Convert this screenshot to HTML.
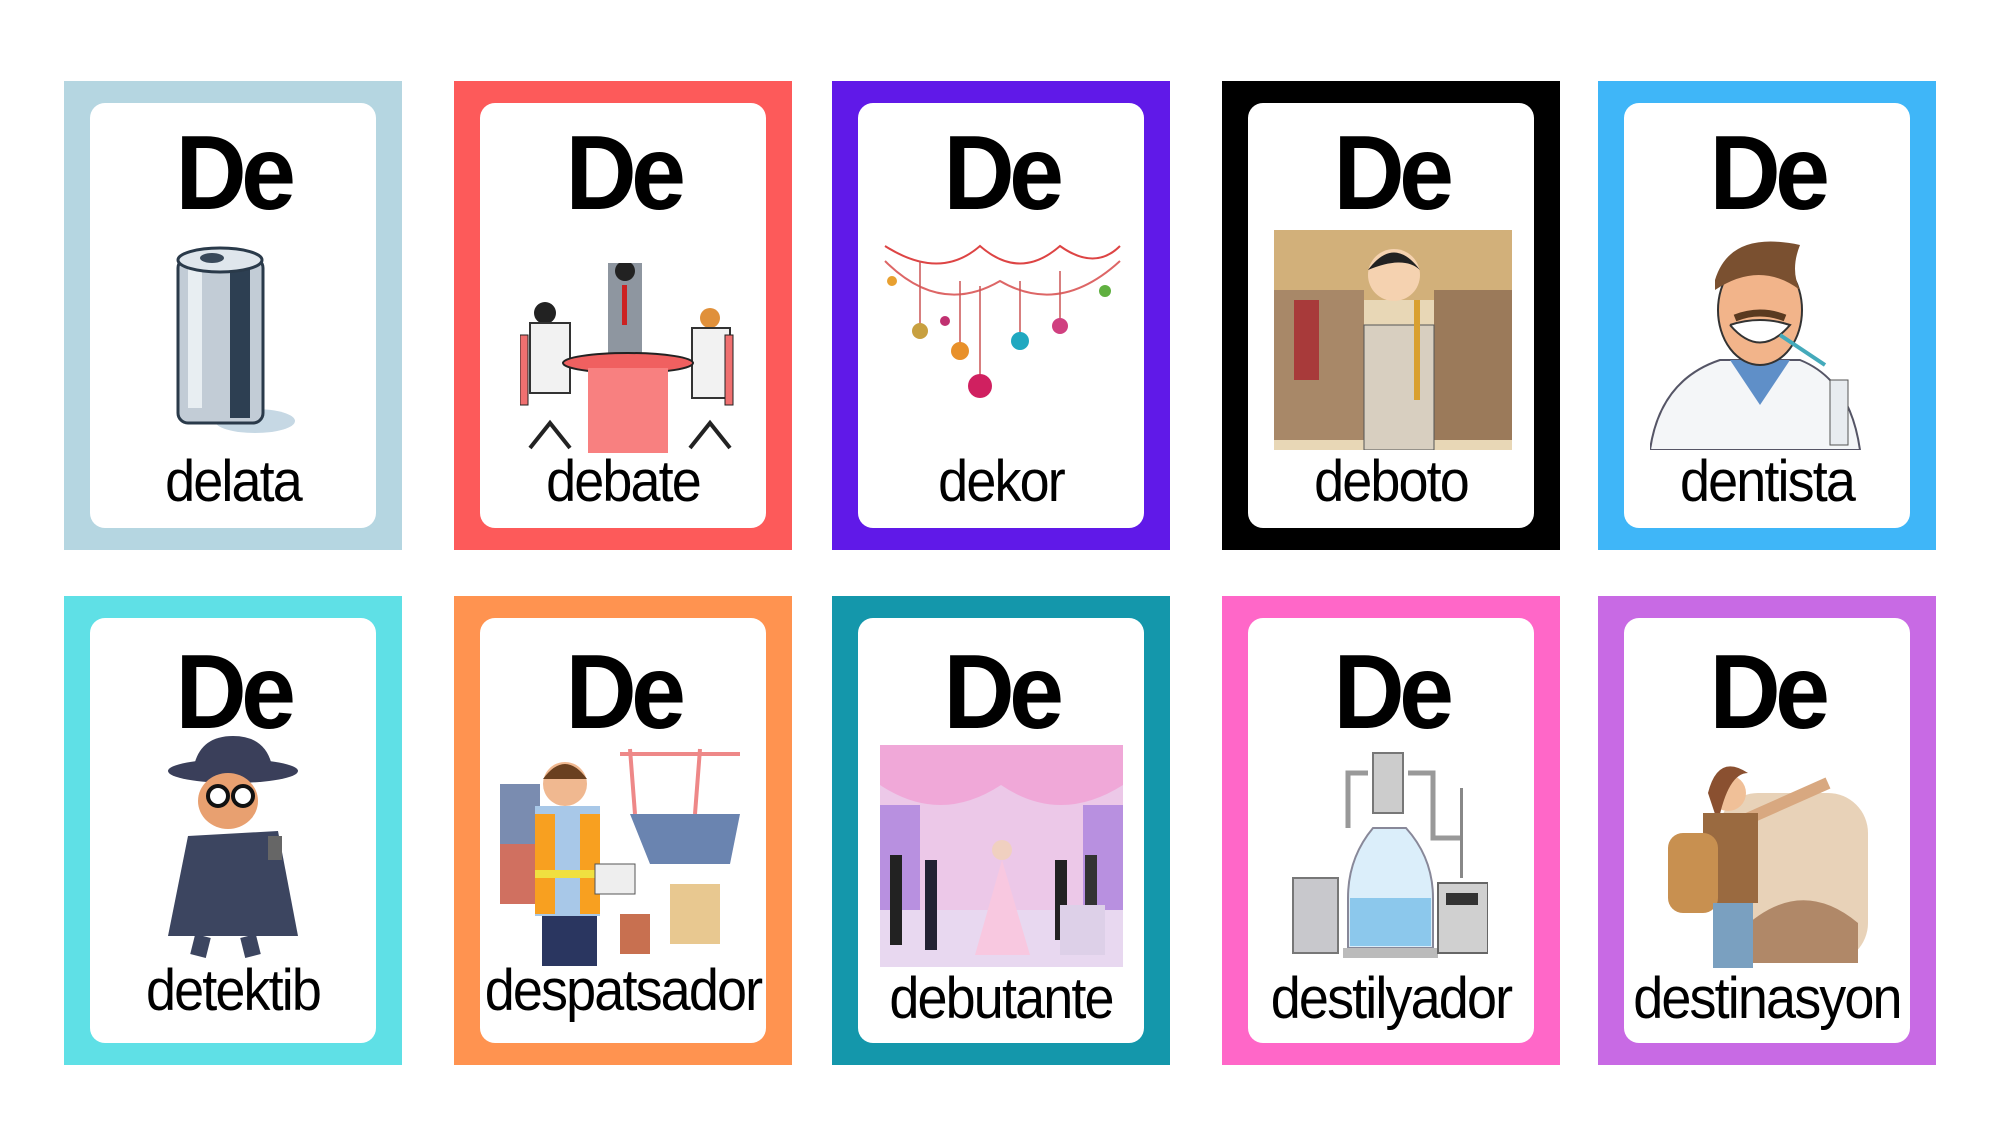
<!DOCTYPE html>
<html><head><meta charset="utf-8">
<style>
*{margin:0;padding:0;box-sizing:border-box}
body{width:2000px;height:1143px;background:#fff;position:relative;overflow:hidden;font-family:"Liberation Sans",sans-serif}
.c{position:absolute;width:338px;height:469px}
.i{position:absolute;left:26px;top:22px;width:286px;height:425px;background:#fff;border-radius:15px}
.de{position:absolute;left:0;width:100%;text-align:center;font-weight:bold;font-size:106px;line-height:1;letter-spacing:-6px;top:17px;transform:scaleX(.93)}
.w{position:absolute;left:-30px;width:346px;text-align:center;font-size:58px;line-height:1;letter-spacing:-2px;top:350px;white-space:nowrap;transform:scaleX(.93)}
.r2 .de{top:21px}.r2 .w{top:344px}
svg{position:absolute}
</style></head><body>

<div class="c" style="left:64px;top:81px;background:#b5d6e1"><div class="i">
<div class="de">De</div>
<svg style="left:80px;top:140px" width="130" height="195" viewBox="0 0 130 195">
<ellipse cx="85" cy="178" rx="40" ry="12" fill="#c6d8e4"/>
<rect x="8" y="15" width="85" height="165" rx="10" fill="#c2ccd6" stroke="#2a3a4a" stroke-width="3"/>
<rect x="60" y="20" width="20" height="155" fill="#2d3f52"/>
<rect x="18" y="25" width="14" height="140" fill="#e8eef2"/>
<ellipse cx="50" cy="17" rx="42" ry="12" fill="#dfe6ec" stroke="#2a3a4a" stroke-width="3"/>
<ellipse cx="42" cy="15" rx="12" ry="5" fill="#39495a"/>
</svg>
<div class="w">delata</div></div></div>

<div class="c" style="left:454px;top:81px;background:#fd5a5a"><div class="i">
<div class="de">De</div>
<svg style="left:40px;top:160px" width="220" height="190" viewBox="0 0 220 190">
<rect x="88" y="0" width="34" height="95" fill="#8e96a0"/><circle cx="105" cy="8" r="10" fill="#222"/>
<rect x="102" y="22" width="5" height="40" fill="#c22"/>
<circle cx="25" cy="50" r="11" fill="#222"/><rect x="10" y="60" width="40" height="70" fill="#f2f2f2" stroke="#333" stroke-width="2"/>
<circle cx="190" cy="55" r="10" fill="#e0903a"/><rect x="172" y="65" width="38" height="70" fill="#f2f2f2" stroke="#333" stroke-width="2"/>
<rect x="0" y="72" width="8" height="70" fill="#f07070" stroke="#222"/><rect x="205" y="72" width="8" height="70" fill="#f07070" stroke="#222"/>
<ellipse cx="108" cy="100" rx="65" ry="10" fill="#f06060" stroke="#222" stroke-width="2"/>
<rect x="68" y="105" width="80" height="85" fill="#f88080"/>
<path d="M10 185 L30 160 L50 185 M170 185 L190 160 L210 185" stroke="#222" stroke-width="4" fill="none"/>
</svg>
<div class="w">debate</div></div></div>

<div class="c" style="left:832px;top:81px;background:#6019e8"><div class="i">
<div class="de">De</div>
<svg style="left:22px;top:128px" width="245" height="170" viewBox="0 0 245 170">
<path d="M5 15 Q60 50 100 15 Q140 50 180 15 Q215 40 240 15" stroke="#d44" stroke-width="2" fill="none"/>
<path d="M5 30 Q60 85 120 50 Q180 85 240 30" stroke="#d66" stroke-width="2" fill="none"/>
<path d="M40 30 L40 100 M80 50 L80 120 M140 50 L140 110 M180 40 L180 95 M100 55 L100 165" stroke="#c55" stroke-width="1.5"/>
<circle cx="12" cy="50" r="5" fill="#e8a030"/><circle cx="40" cy="100" r="8" fill="#c8a040"/><circle cx="80" cy="120" r="9" fill="#e8902a"/><circle cx="140" cy="110" r="9" fill="#20a8c0"/><circle cx="180" cy="95" r="8" fill="#d04080"/><circle cx="100" cy="155" r="12" fill="#d02060"/><circle cx="225" cy="60" r="6" fill="#60b040"/><circle cx="65" cy="90" r="5" fill="#c03070"/>
</svg>
<div class="w">dekor</div></div></div>

<div class="c" style="left:1222px;top:81px;background:#000"><div class="i">
<div class="de">De</div>
<svg style="left:26px;top:127px" width="238" height="220" viewBox="0 0 238 220">
<rect width="238" height="220" fill="#e8d7b6"/>
<rect x="0" y="0" width="238" height="70" fill="#d2b07a"/>
<rect x="0" y="60" width="90" height="150" fill="#a88868"/><rect x="160" y="60" width="78" height="150" fill="#9b7a5a"/>
<rect x="20" y="70" width="25" height="80" fill="#a83a3a"/>
<rect x="90" y="95" width="70" height="125" fill="#d8cfc0" stroke="#555"/>
<circle cx="120" cy="45" r="26" fill="#f5d2b0"/><path d="M94 40 Q120 5 146 40 Q130 25 94 40" fill="#222"/>
<rect x="140" y="70" width="6" height="100" fill="#d9a030"/>
</svg>
<div class="w">deboto</div></div></div>

<div class="c" style="left:1598px;top:81px;background:#3fb6f8"><div class="i">
<div class="de">De</div>
<svg style="left:26px;top:127px" width="225" height="220" viewBox="0 0 225 220">
<path d="M0 220 Q10 150 70 130 L150 130 Q200 150 210 220 Z" fill="#f4f6f8" stroke="#556" stroke-width="2"/>
<path d="M80 130 L110 175 L140 130 Z" fill="#5f8fc8"/>
<ellipse cx="110" cy="80" rx="42" ry="55" fill="#f2b48a" stroke="#333" stroke-width="2"/>
<path d="M65 50 Q80 0 150 15 Q140 40 150 60 Q110 30 65 60 Z" fill="#7a5030"/>
<path d="M80 95 Q110 85 140 95 Q110 130 80 95" fill="#fff" stroke="#333" stroke-width="2"/>
<path d="M85 88 Q110 78 135 88" stroke="#5a3a20" stroke-width="7" fill="none"/>
<path d="M130 105 L175 135" stroke="#4ab" stroke-width="4"/>
<rect x="180" y="150" width="18" height="65" fill="#e8ecf0" stroke="#555"/>
</svg>
<div class="w">dentista</div></div></div>

<div class="c r2" style="left:64px;top:596px;background:#5fe0e6"><div class="i">
<div class="de">De</div>
<svg style="left:58px;top:118px" width="170" height="225" viewBox="0 0 170 225">
<ellipse cx="85" cy="35" rx="65" ry="12" fill="#3a3f5a"/><path d="M45 35 Q50 0 85 0 Q120 0 125 35 Z" fill="#3a3f5a"/>
<ellipse cx="80" cy="65" rx="30" ry="28" fill="#e8a070"/>
<circle cx="70" cy="60" r="10" fill="#fff" stroke="#111" stroke-width="4"/><circle cx="95" cy="60" r="10" fill="#fff" stroke="#111" stroke-width="4"/>
<path d="M40 100 L130 95 L150 200 L20 200 Z" fill="#3c4560"/>
<rect x="120" y="100" width="14" height="24" fill="#666"/>
<path d="M55 200 L50 220 M100 200 L105 220" stroke="#3c4560" stroke-width="16"/>
</svg>
<div class="w">detektib</div></div></div>

<div class="c r2" style="left:454px;top:596px;background:#ff9350"><div class="i">
<div class="de">De</div>
<svg style="left:20px;top:126px" width="248" height="222" viewBox="0 0 248 222">
<path d="M130 5 L135 70 M200 5 L195 70 M120 10 L240 10" stroke="#e88" stroke-width="4"/>
<rect x="0" y="40" width="40" height="120" fill="#7a8cb0"/><rect x="0" y="100" width="60" height="60" fill="#d07060"/>
<path d="M130 70 L240 70 L230 120 L150 120 Z" fill="#6a84b0"/>
<rect x="170" y="140" width="50" height="60" fill="#e8c890"/><rect x="120" y="170" width="30" height="40" fill="#c87050"/>
<circle cx="65" cy="40" r="22" fill="#f0b890"/><path d="M43 35 Q65 5 87 35" fill="#6a4020"/>
<rect x="35" y="62" width="65" height="110" fill="#a8c8e8"/>
<path d="M35 70 L55 70 L55 170 L35 170 Z M80 70 L100 70 L100 170 L80 170 Z" fill="#f8a020"/>
<path d="M35 130 L100 130" stroke="#f0e040" stroke-width="8"/>
<rect x="42" y="172" width="55" height="50" fill="#2a3660"/>
<rect x="95" y="120" width="40" height="30" fill="#eee" stroke="#555"/>
</svg>
<div class="w">despatsador</div></div></div>

<div class="c r2" style="left:832px;top:596px;background:#1497ab"><div class="i">
<div class="de">De</div>
<svg style="left:22px;top:127px" width="243" height="222" viewBox="0 0 243 222">
<rect width="243" height="222" fill="#ecc8e8"/>
<path d="M0 0 H243 V40 Q180 80 121 40 Q60 80 0 40 Z" fill="#f0a8d8"/>
<rect x="0" y="60" width="40" height="110" fill="#b890e0"/><rect x="203" y="60" width="40" height="110" fill="#b890e0"/>
<rect x="0" y="165" width="243" height="57" fill="#e8d8f0"/>
<circle cx="122" cy="105" r="10" fill="#f0d0c0"/><path d="M122 115 L95 210 L150 210 Z" fill="#f8c8e0"/>
<rect x="10" y="110" width="12" height="90" fill="#222"/><rect x="45" y="115" width="12" height="90" fill="#223"/>
<rect x="175" y="115" width="12" height="80" fill="#222"/><rect x="205" y="110" width="12" height="80" fill="#333"/>
<rect x="180" y="160" width="45" height="50" fill="#ddd0e8"/>
</svg>
<div class="w" style="top:352px">debutante</div></div></div>

<div class="c r2" style="left:1222px;top:596px;background:#ff67c8"><div class="i">
<div class="de">De</div>
<svg style="left:40px;top:130px" width="200" height="212" viewBox="0 0 200 212">
<path d="M60 80 V25 H80 M120 25 H145 V90 H175" stroke="#999" stroke-width="5" fill="none"/>
<rect x="85" y="5" width="30" height="60" fill="#ccc" stroke="#777" stroke-width="2"/>
<rect x="172" y="40" width="3" height="90" fill="#888"/>
<path d="M85 80 Q60 110 60 150 V200 H145 V150 Q145 110 118 80 Z" fill="#dbeefa" stroke="#889" stroke-width="2"/>
<path d="M62 150 H143 V198 H62 Z" fill="#8cc8ec"/>
<rect x="55" y="200" width="95" height="10" fill="#bbb"/>
<rect x="5" y="130" width="45" height="75" fill="#c8c8cc" stroke="#777" stroke-width="2"/>
<rect x="150" y="135" width="50" height="70" fill="#d0d0d0" stroke="#666" stroke-width="2"/>
<rect x="158" y="145" width="32" height="12" fill="#333"/>
</svg>
<div class="w" style="top:352px">destilyador</div></div></div>

<div class="c r2" style="left:1598px;top:596px;background:#c86ae4"><div class="i">
<div class="de">De</div>
<svg style="left:34px;top:135px" width="210" height="215" viewBox="0 0 210 215">
<rect x="60" y="40" width="150" height="170" rx="40" fill="#e8d2b8"/>
<path d="M80 180 Q140 120 200 170 V210 H80 Z" fill="#b08868"/>
<circle cx="70" cy="40" r="18" fill="#f0c098"/><path d="M50 40 Q60 0 90 20 Q70 20 60 70 Z" fill="#8a5030"/>
<path d="M80 70 L170 30" stroke="#d8a880" stroke-width="12"/>
<rect x="45" y="60" width="55" height="90" fill="#9a6a40"/>
<rect x="10" y="80" width="50" height="80" rx="15" fill="#c89050"/>
<rect x="55" y="150" width="40" height="65" fill="#7aa0c0"/>
</svg>
<div class="w" style="top:352px">destinasyon</div></div></div>

</body></html>
